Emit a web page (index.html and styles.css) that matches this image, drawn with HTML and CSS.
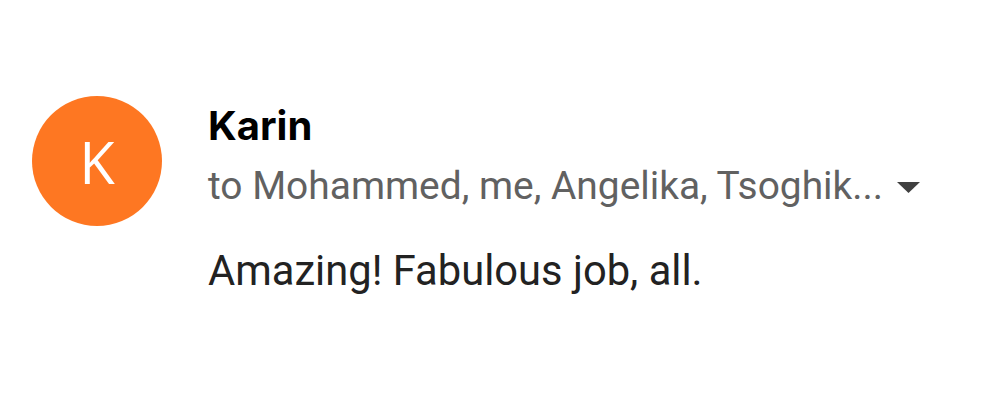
FILE: index.html
```html
<!DOCTYPE html>
<html>
<head>
<meta charset="utf-8">
<link rel="stylesheet" href="styles.css">
</head>
<body>
<div class="message">
  <div class="avatar">K</div>
  <div class="content">
    <div class="sender">Karin</div>
    <div class="recipients">
      <span class="to">to Mohammed, me, Angelika, Tsoghik...</span>
      <svg class="caret" width="23" height="11" viewBox="0 0 23 11"><path d="M0 0 L23 0 L11.5 11 Z" fill="#404040"/></svg>
    </div>
    <div class="body">Amazing! Fabulous job, all.</div>
  </div>
</div>
</body>
</html>
```
FILE: styles.css
```css
html, body {
  margin: 0;
  padding: 0;
  background: #fff;
}
.message {
  display: flex;
  align-items: flex-start;
  padding: 96px 0 0 32px;
  gap: 46px;
}
.avatar {
  width: 130px;
  height: 130px;
  border-radius: 50%;
  background: #fe7722;
  color: #fff;
  font-family: "Open Sans", sans-serif;
  font-size: 58px;
  display: flex;
  align-items: center;
  justify-content: center;
  flex-shrink: 0;
}
.content {
  display: flex;
  flex-direction: column;
}
.sender {
  font-family: Inter, sans-serif;
  font-weight: 700;
  font-size: 40px;
  line-height: 60px;
  color: #000;
}
.recipients {
  display: flex;
  align-items: center;
  gap: 14px;
  margin-top: 4px;
}
.to {
  font-family: Roboto, sans-serif;
  font-size: 38.9px;
  line-height: 52px;
  color: #616161;
}
.caret {
  margin-top: 2px;
}
.body {
  margin-top: 31px;
  font-family: Roboto, sans-serif;
  font-weight: 400;
  font-size: 41.7px;
  line-height: 56px;
  color: #222;
}
```
